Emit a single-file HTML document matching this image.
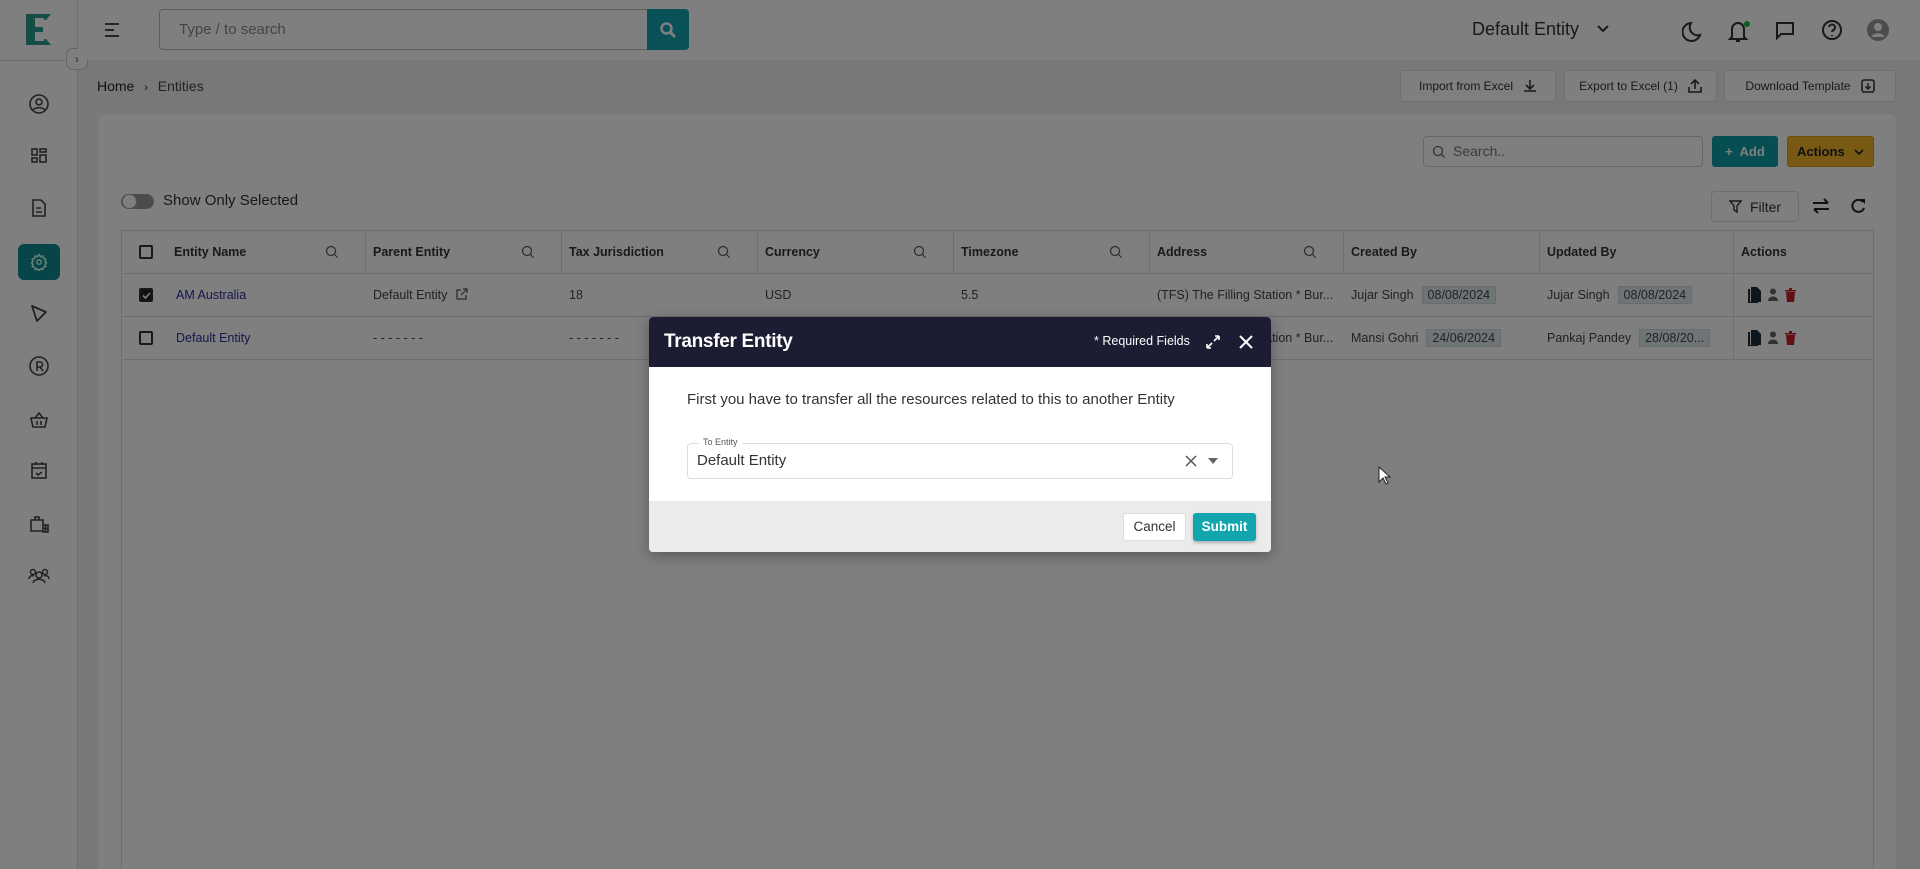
<!DOCTYPE html>
<html><head><meta charset="utf-8"><style>
*{box-sizing:border-box;margin:0;padding:0}
html,body{width:1920px;height:869px;overflow:hidden}
body{position:relative;font-family:"Liberation Sans",sans-serif;background:#eef0f5;color:#222}
.a{position:absolute}
.sb{left:0;top:0;width:78px;height:869px;background:#fff;border-right:1px solid #ddd}
.tb{left:78px;top:0;width:1842px;height:60px;background:#fff}
.btn{position:absolute;background:#fff;border:1px solid #ddd;border-radius:4px;font-size:12px;color:#333;display:flex;align-items:center;justify-content:center;gap:10px}
.th{position:absolute;top:0;height:43px;font-size:12.5px;font-weight:bold;color:#333;display:flex;align-items:center;padding-left:7px;border-right:1px solid #ddd}
.th svg{margin-left:auto;margin-right:26px}
.td{position:absolute;font-size:12.5px;color:#444;display:flex;align-items:center;padding-left:7px;height:43px}
.chip{background:#dfe8ee;border:1px solid #cdd8df;padding:1px 5px;margin-left:8px;font-size:12.5px}
.cb{position:absolute;width:14px;height:14px;border:2px solid #333;border-radius:2px}
.si{position:absolute;left:27px}
</style></head><body>
<div class="a sb"></div>
<div class="a" style="left:0;top:60px;width:78px;height:1px;background:#ddd"></div>
<svg class="a" style="left:26px;top:14px" width="26" height="31" viewBox="0 0 26 31"><path d="M0 0H25L20 6H18V4H9V13H17V18H9V27H18V25L20 25L25 31H0Z" fill="#2a9d8f"/></svg>
<div class="a" style="left:66px;top:48px;width:22px;height:22px;border:1px solid #ccc;border-radius:7px;background:#fff;font-size:12px;color:#555;text-align:center;line-height:20px">›</div>
<!-- sidebar icons, each 24x24 centered on y -->
<svg class="si" style="top:92px" width="24" height="24" viewBox="0 0 24 24" fill="none" stroke="#444" stroke-width="1.6"><circle cx="12" cy="12" r="9"/><circle cx="12" cy="10" r="3"/><path d="M6 18c2-3 10-3 12 0"/></svg>
<svg class="si" style="top:144px" width="24" height="24" viewBox="0 0 24 24" fill="none" stroke="#444" stroke-width="1.6"><rect x="5" y="5" width="5" height="6"/><rect x="13" y="5" width="6" height="3"/><rect x="5" y="14" width="5" height="4"/><rect x="13" y="11" width="6" height="7"/></svg>
<svg class="si" style="top:196px" width="24" height="24" viewBox="0 0 24 24" fill="none" stroke="#444" stroke-width="1.6"><path d="M6 4h8l4 4v12H6z M9 12h5M9 16h6"/></svg>
<div class="a" style="left:18px;top:244px;width:42px;height:36px;background:#0e8a93;border-radius:6px"></div>
<svg class="a" style="left:30px;top:253px" width="18" height="18" viewBox="0 0 24 24" fill="none" stroke="#cfe" stroke-width="2"><circle cx="12" cy="12" r="3"/><path d="M12 2l2 3 3-1 1 3 3 1-1 3 2 2-2 2 1 3-3 1-1 3-3-1-2 3-2-3-3 1-1-3-3-1 1-3-2-2 2-2-1-3 3-1 1-3 3 1z"/></svg>
<svg class="si" style="top:301px" width="24" height="24" viewBox="0 0 24 24" fill="none" stroke="#444" stroke-width="1.8" stroke-linejoin="round"><path d="M5 5l14 6-9 9z"/></svg>
<svg class="si" style="top:354px" width="24" height="24" viewBox="0 0 24 24" fill="none" stroke="#444" stroke-width="1.6"><circle cx="12" cy="12" r="9"/><path d="M10 17V8h3a2.5 2.5 0 010 5h-3M13 13l3 4"/></svg>
<svg class="si" style="top:407px" width="24" height="24" viewBox="0 0 24 24" fill="none" stroke="#444" stroke-width="1.6"><path d="M4 11h16l-2 9H6z M8 11l4-5 4 5 M10 14v4M14 14v4"/></svg>
<svg class="si" style="top:458px" width="24" height="24" viewBox="0 0 24 24" fill="none" stroke="#444" stroke-width="1.6"><rect x="5" y="6" width="14" height="14"/><path d="M5 10h14M9 4v3M15 4v3M9 15l2 2 4-3"/></svg>
<svg class="si" style="top:512px" width="24" height="24" viewBox="0 0 24 24" fill="none" stroke="#444" stroke-width="1.6"><path d="M4 8h12v11H4z M8 8V5h4v3 M16 13h5v7h-5z M18.5 13v7M16 16.5h5"/></svg>
<svg class="si" style="top:564px" width="24" height="24" viewBox="0 0 24 24" fill="none" stroke="#444" stroke-width="1.5"><circle cx="12" cy="11" r="3"/><circle cx="6" cy="8" r="2.5"/><circle cx="18" cy="8" r="2.5"/><path d="M6 19c1-5 11-5 12 0M2 15c0-3 3-4 5-3M22 15c0-3-3-4-5-3"/></svg>
<!-- topbar -->
<div class="a tb"></div>
<svg class="a" style="left:103px;top:22px" width="18" height="16"><path d="M2 2h14M2 8h9M2 14h14" stroke="#333" stroke-width="1.8"/></svg>
<div class="a" style="left:159px;top:9px;width:530px;height:41px;border:1px solid #bbb;border-radius:4px;background:#fff"></div>
<div class="a" style="left:179px;top:21px;font-size:15px;color:#888">Type / to search</div>
<div class="a" style="left:647px;top:9px;width:42px;height:41px;background:#11a3ae;border-radius:0 4px 4px 0"></div>
<svg class="a" style="left:659px;top:21px" width="18" height="18" viewBox="0 0 18 18"><circle cx="7.5" cy="7.5" r="5" stroke="#fff" stroke-width="2.5" fill="none"/><path d="M11 11l5 5" stroke="#fff" stroke-width="3"/></svg>
<div class="a" style="left:1472px;top:19px;font-size:18px;color:#333">Default Entity</div>
<svg class="a" style="left:1596px;top:24px" width="14" height="10"><path d="M2 2l5 5 5-5" stroke="#333" stroke-width="2" fill="none"/></svg>
<svg class="a" style="left:1682px;top:18px" width="220" height="26" viewBox="0 0 220 26" fill="none" stroke="#333" stroke-width="2">
<path d="M18 17A8 8 0 019 5a9 9 0 109 12z"/>
<path d="M50 19V11a6 6 0 0112 0v8l2 2H48z M54 23h4"/><circle cx="65" cy="6" r="3" fill="#1bbd3a" stroke="none"/>
<path d="M95 5h16v11H99l-4 4z"/>
<circle cx="150" cy="12" r="9"/><path d="M147 9a3 3 0 116 1c0 2-3 2-3 4M150 17v1"/>
<circle cx="196" cy="12" r="11" fill="#999" stroke="none"/><circle cx="196" cy="9" r="4" fill="#fff" stroke="none"/><path d="M189 19c3-5 11-5 14 0" fill="#fff" stroke="none"/>
</svg>
<!-- breadcrumb -->
<div class="a" style="left:97px;top:78px;font-size:14px;color:#222">Home <span style="font-size:11px;margin:0 6px">›</span> <span style="color:#444">Entities</span></div>
<div class="btn" style="left:1400px;top:70px;width:156px;height:32px">Import from Excel <svg width="14" height="14"><path d="M7 1v8M3 6l4 4 4-4M1 12h12" stroke="#333" stroke-width="1.6" fill="none"/></svg></div>
<div class="btn" style="left:1564px;top:70px;width:153px;height:32px">Export to Excel (1) <svg width="14" height="14"><path d="M7 10V2M3 5l4-4 4 4M1 8v5h12V8" stroke="#333" stroke-width="1.6" fill="none"/></svg></div>
<div class="btn" style="left:1724px;top:70px;width:172px;height:32px">Download Template <svg width="14" height="14"><rect x="1" y="1" width="12" height="12" rx="2" stroke="#333" stroke-width="1.5" fill="none"/><path d="M7 4v6M4.5 7.5L7 10l2.5-2.5" stroke="#333" stroke-width="1.4" fill="none"/></svg></div>
<!-- card -->
<div class="a" style="left:98px;top:114px;width:1798px;height:760px;background:#fff;border-radius:6px"></div>
<div class="a" style="left:1423px;top:136px;width:280px;height:31px;border:1px solid #ccc;border-radius:4px"></div>
<svg class="a" style="left:1432px;top:145px" width="14" height="14"><circle cx="6" cy="6" r="4.5" stroke="#666" fill="none" stroke-width="1.3"/><path d="M9.5 9.5l3 3" stroke="#666" stroke-width="1.3"/></svg>
<div class="a" style="left:1453px;top:143px;font-size:14px;color:#777">Search..</div>
<div class="a" style="left:1712px;top:136px;width:66px;height:31px;background:#0e9ca6;border-radius:3px;color:#fff;font-size:13px;font-weight:bold;line-height:31px;text-align:center">+&nbsp; Add</div>
<div class="a" style="left:1787px;top:136px;width:87px;height:31px;background:#f0b429;border:1px solid #d99a12;border-radius:3px;color:#222;font-size:13px;font-weight:bold;line-height:29px;padding-left:9px">Actions <svg width="10" height="8" style="margin-left:6px"><path d="M1 2l4 4 4-4" stroke="#222" stroke-width="1.6" fill="none"/></svg></div>
<div class="a" style="left:121px;top:194px;width:33px;height:15px;border-radius:8px;background:#999"></div>
<div class="a" style="left:122px;top:194px;width:15px;height:15px;border-radius:50%;background:#fff;border:1px solid #aaa"></div>
<div class="a" style="left:163px;top:192px;font-size:15px;color:#333">Show Only Selected</div>
<div class="btn" style="left:1711px;top:191px;width:88px;height:31px;font-size:14px;gap:8px"><svg width="13" height="13"><path d="M1 1h11L8 6v6L5 10V6z" stroke="#333" stroke-width="1.4" fill="none"/></svg> Filter</div>
<svg class="a" style="left:1811px;top:197px" width="20" height="18"><path d="M2 6h15M13 2l4 4M18 12H3M7 16l-4-4" stroke="#222" stroke-width="2" fill="none"/></svg>
<svg class="a" style="left:1849px;top:197px" width="18" height="18"><path d="M14 5A6 6 0 1015 11" stroke="#222" stroke-width="2" fill="none"/><path d="M11 2h5v5z" fill="#222"/></svg>
<!-- table -->
<div class="a" style="left:121px;top:230px;width:1753px;height:640px;border:1px solid #ddd"></div>
<div class="a" style="left:121px;top:230px;width:1753px;height:129px">
 <div class="a" style="left:0;top:43px;width:1753px;height:1px;background:#ddd"></div>
 <div class="a" style="left:0;top:86px;width:1753px;height:1px;background:#ddd"></div>
 <div class="a" style="left:0;top:129px;width:1753px;height:1px;background:#ddd"></div>
 <div class="a" style="left:1612px;top:43px;width:1px;height:86px;background:#ddd"></div>
 <div class="cb" style="left:18px;top:15px"></div>
 <div class="th" style="left:46px;width:199px">Entity Name<svg width="14" height="14"><circle cx="6" cy="6" r="4.5" stroke="#555" fill="none" stroke-width="1.2"/><path d="M9.5 9.5l3 3" stroke="#555" stroke-width="1.2"/></svg></div>
 <div class="th" style="left:245px;width:196px">Parent Entity<svg width="14" height="14"><circle cx="6" cy="6" r="4.5" stroke="#555" fill="none" stroke-width="1.2"/><path d="M9.5 9.5l3 3" stroke="#555" stroke-width="1.2"/></svg></div>
 <div class="th" style="left:441px;width:196px">Tax Jurisdiction<svg width="14" height="14"><circle cx="6" cy="6" r="4.5" stroke="#555" fill="none" stroke-width="1.2"/><path d="M9.5 9.5l3 3" stroke="#555" stroke-width="1.2"/></svg></div>
 <div class="th" style="left:637px;width:196px">Currency<svg width="14" height="14"><circle cx="6" cy="6" r="4.5" stroke="#555" fill="none" stroke-width="1.2"/><path d="M9.5 9.5l3 3" stroke="#555" stroke-width="1.2"/></svg></div>
 <div class="th" style="left:833px;width:196px">Timezone<svg width="14" height="14"><circle cx="6" cy="6" r="4.5" stroke="#555" fill="none" stroke-width="1.2"/><path d="M9.5 9.5l3 3" stroke="#555" stroke-width="1.2"/></svg></div>
 <div class="th" style="left:1029px;width:194px">Address<svg width="14" height="14"><circle cx="6" cy="6" r="4.5" stroke="#555" fill="none" stroke-width="1.2"/><path d="M9.5 9.5l3 3" stroke="#555" stroke-width="1.2"/></svg></div>
 <div class="th" style="left:1223px;width:196px">Created By</div>
 <div class="th" style="left:1419px;width:194px">Updated By</div>
 <div class="th" style="left:1613px;width:140px;border:none">Actions</div>
 <div class="cb" style="left:18px;top:58px;background:#222"></div>
 <svg class="a" style="left:21px;top:61px" width="9" height="9"><path d="M1 4.5l2.5 2.5L8 2" stroke="#fff" stroke-width="1.6" fill="none"/></svg>
 <div class="td" style="left:48px;top:43px;color:#2b2e9a">AM Australia</div>
 <div class="td" style="left:245px;top:43px">Default Entity <svg width="13" height="13" style="margin-left:8px"><path d="M6 2H2v9h9V7M8 1h4v4M12 1L6 7" stroke="#555" stroke-width="1.2" fill="none"/></svg></div>
 <div class="td" style="left:441px;top:43px">18</div>
 <div class="td" style="left:637px;top:43px">USD</div>
 <div class="td" style="left:833px;top:43px">5.5</div>
 <div class="td" style="left:1029px;top:43px">(TFS) The Filling Station * Bur...</div>
 <div class="td" style="left:1223px;top:43px">Jujar Singh<span class="chip">08/08/2024</span></div>
 <div class="td" style="left:1419px;top:43px">Jujar Singh<span class="chip">08/08/2024</span></div>
 <div class="td" style="left:1620px;top:43px;gap:7px"><svg width="13" height="16"><path d="M0 2h2v13h8v1H0z" fill="#1b2b3a"/><path d="M3 0h6l4 4v11H3z" fill="#1b2b3a"/></svg><svg width="10" height="13"><circle cx="5" cy="3.5" r="3" fill="#666"/><path d="M0 13c0-6 10-6 10 0z" fill="#666"/></svg><svg width="11" height="14"><path d="M0 2h11v1.5H0zM4 0h3v2H4zM1 4h9l-1 10H2z" fill="#c0202a"/></svg></div>
 <div class="cb" style="left:18px;top:101px"></div>
 <div class="td" style="left:48px;top:86px;color:#2b2e9a">Default Entity</div>
 <div class="td" style="left:245px;top:86px">- - - - - - -</div>
 <div class="td" style="left:441px;top:86px">- - - - - - -</div>
 <div class="td" style="left:1029px;top:86px">(TFS) The Filling Station * Bur...</div>
 <div class="td" style="left:1223px;top:86px">Mansi Gohri<span class="chip">24/06/2024</span></div>
 <div class="td" style="left:1419px;top:86px">Pankaj Pandey<span class="chip">28/08/20...</span></div>
 <div class="td" style="left:1620px;top:86px;gap:7px"><svg width="13" height="16"><path d="M0 2h2v13h8v1H0z" fill="#1b2b3a"/><path d="M3 0h6l4 4v11H3z" fill="#1b2b3a"/></svg><svg width="10" height="13"><circle cx="5" cy="3.5" r="3" fill="#666"/><path d="M0 13c0-6 10-6 10 0z" fill="#666"/></svg><svg width="11" height="14"><path d="M0 2h11v1.5H0zM4 0h3v2H4zM1 4h9l-1 10H2z" fill="#c0202a"/></svg></div>
</div>
<!-- overlay -->
<div class="a" style="left:0;top:0;width:1920px;height:869px;background:rgba(0,0,0,0.5)"></div>
<!-- modal -->
<div class="a" style="left:649px;top:317px;width:622px;height:235px;background:#fff;border-radius:4px;overflow:hidden;box-shadow:0 4px 14px rgba(0,0,0,.3)">
 <div class="a" style="left:0;top:0;width:622px;height:50px;background:#1c1c33"></div>
 <div class="a" style="left:15px;top:14px;font-size:19px;font-weight:bold;color:#fff;letter-spacing:-0.3px">Transfer Entity</div>
 <div class="a" style="left:445px;top:17px;font-size:12.5px;color:#fff">* Required Fields</div>
 <svg class="a" style="left:555px;top:16px" width="18" height="18"><path d="M3 15l5-5M3 15v-4M3 15h4M15 3l-5 5M15 3v4M15 3h-4" stroke="#fff" stroke-width="1.6" fill="none"/></svg>
 <svg class="a" style="left:589px;top:17px" width="16" height="16"><path d="M2 2l12 12M14 2L2 14" stroke="#fff" stroke-width="2"/></svg>
 <div class="a" style="left:38px;top:74px;font-size:15px;color:#333">First you have to transfer all the resources related to this to another Entity</div>
 <div class="a" style="left:38px;top:126px;width:546px;height:36px;border:1px solid #ddd;border-radius:4px"></div>
 <div class="a" style="left:50px;top:120px;font-size:9px;color:#555;background:#fff;padding:0 4px">To Entity</div>
 <div class="a" style="left:48px;top:135px;font-size:15px;color:#333">Default Entity</div>
 <svg class="a" style="left:535px;top:137px" width="14" height="14"><path d="M2 2l10 10M12 2L2 12" stroke="#555" stroke-width="1.5"/></svg>
 <svg class="a" style="left:559px;top:141px" width="10" height="6"><path d="M0 0h10L5 6z" fill="#666"/></svg>
 <div class="a" style="left:0;top:184px;width:622px;height:51px;background:#ebebeb"></div>
 <div class="a" style="left:474px;top:196px;width:63px;height:28px;background:#fff;border:1px solid #ddd;border-radius:3px;font-size:13.5px;color:#333;text-align:center;line-height:26px">Cancel</div>
 <div class="a" style="left:544px;top:196px;width:63px;height:28px;background:#13a5ae;border-radius:3px;font-size:13.5px;font-weight:bold;color:#fff;text-align:center;line-height:28px;box-shadow:0 2px 3px rgba(0,0,0,.25)">Submit</div>
</div>
<svg class="a" style="left:1378px;top:466px" width="14" height="20"><path d="M1 1v15l4-4 3 6 2-1-3-6h5z" fill="#fff" stroke="#222"/></svg>
</body></html>
